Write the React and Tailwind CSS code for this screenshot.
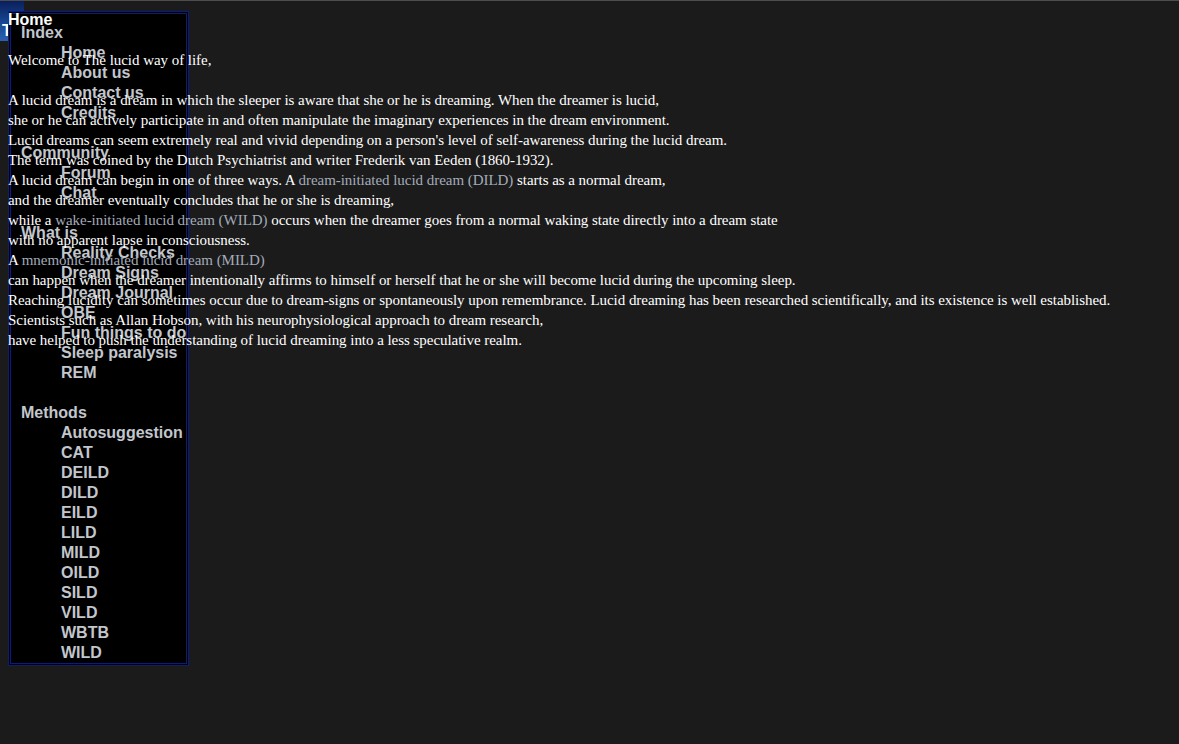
import React from "react";

const sections = [
  {
    title: "Index",
    items: ["Home", "About us", "Contact us", "Credits"],
  },
  {
    title: "Community",
    items: ["Forum", "Chat"],
  },
  {
    title: "What is",
    items: [
      "Reality Checks",
      "Dream Signs",
      "Dream Journal",
      "OBE",
      "Fun things to do",
      "Sleep paralysis",
      "REM",
    ],
  },
  {
    title: "Methods",
    items: [
      "Autosuggestion",
      "CAT",
      "DEILD",
      "DILD",
      "EILD",
      "LILD",
      "MILD",
      "OILD",
      "SILD",
      "VILD",
      "WBTB",
      "WILD",
    ],
  },
];

const Link = ({ children }) => (
  <a href="#" className="text-[#a3abba] no-underline">
    {children}
  </a>
);

const Sidebar = () => (
  <div className="absolute left-[8px] top-[10px] w-[181px] h-[655px] bg-black border-[3px] border-double border-[#0c1c7a] pl-[10px] pt-[9px] font-['Liberation_Sans',Arial,sans-serif] text-[16px] leading-[20px] font-bold text-[#c2c6cd]">
    {sections.map((section, idx) => (
      <div key={section.title} className={idx > 0 ? "mt-[20px]" : ""}>
        <div>{section.title}</div>
        <ul className="pl-[40px]">
          {section.items.map((item) => (
            <li key={item} className="whitespace-nowrap">
              {item}
            </li>
          ))}
        </ul>
      </div>
    ))}
  </div>
);

export default function App() {
  return (
    <div className="relative min-h-screen bg-[#1b1b1b] border-t border-[#4d4d4d] overflow-hidden">
      {/* header banner, mostly covered by the menu box */}
      <div className="h-[40px] w-[24px] bg-gradient-to-b from-[#0a1f5c] via-[#17448f] to-[#2a62b0]">
        <h1 className="pl-[2px] pt-[21px] font-['Liberation_Sans',Arial,sans-serif] text-[16px] leading-[18px] font-bold text-white whitespace-nowrap">
          The lucid way of life
        </h1>
      </div>

      <Sidebar />

      <a
        href="#"
        className="absolute left-[8px] top-[9px] font-['Liberation_Sans',Arial,sans-serif] text-[16px] leading-[20px] font-bold text-white"
      >
        Home
      </a>

      <div className="relative pl-[8px] pt-[9px] font-['Liberation_Serif','Times_New_Roman',serif] text-[15px] leading-[20px] tracking-[-0.04px] text-white whitespace-nowrap">
        Welcome to The lucid way of life,
        <br />
        <br />
        A lucid dream is a dream in which the sleeper is aware that she or he is dreaming. When the dreamer is lucid,
        <br />
        she or he can actively participate in and often manipulate the imaginary experiences in the dream environment.
        <br />
        Lucid dreams can seem extremely real and vivid depending on a person's level of self-awareness during the lucid dream.
        <br />
        The term was coined by the Dutch Psychiatrist and writer Frederik van Eeden (1860-1932).
        <br />
        A lucid dream can begin in one of three ways. A <Link>dream-initiated lucid dream (DILD)</Link> starts as a normal dream,
        <br />
        and the dreamer eventually concludes that he or she is dreaming,
        <br />
        while a <Link>wake-initiated lucid dream (WILD)</Link> occurs when the dreamer goes from a normal waking state directly into a dream state
        <br />
        with no apparent lapse in consciousness.
        <br />
        A <Link>mnemonic-initiated lucid dream (MILD)</Link>
        <br />
        can happen when the dreamer intentionally affirms to himself or herself that he or she will become lucid during the upcoming sleep.
        <br />
        Reaching lucidity can sometimes occur due to dream-signs or spontaneously upon remembrance. Lucid dreaming has been researched scientifically, and its existence is well established.
        <br />
        Scientists such as Allan Hobson, with his neurophysiological approach to dream research,
        <br />
        have helped to push the understanding of lucid dreaming into a less speculative realm.
      </div>
    </div>
  );
}
